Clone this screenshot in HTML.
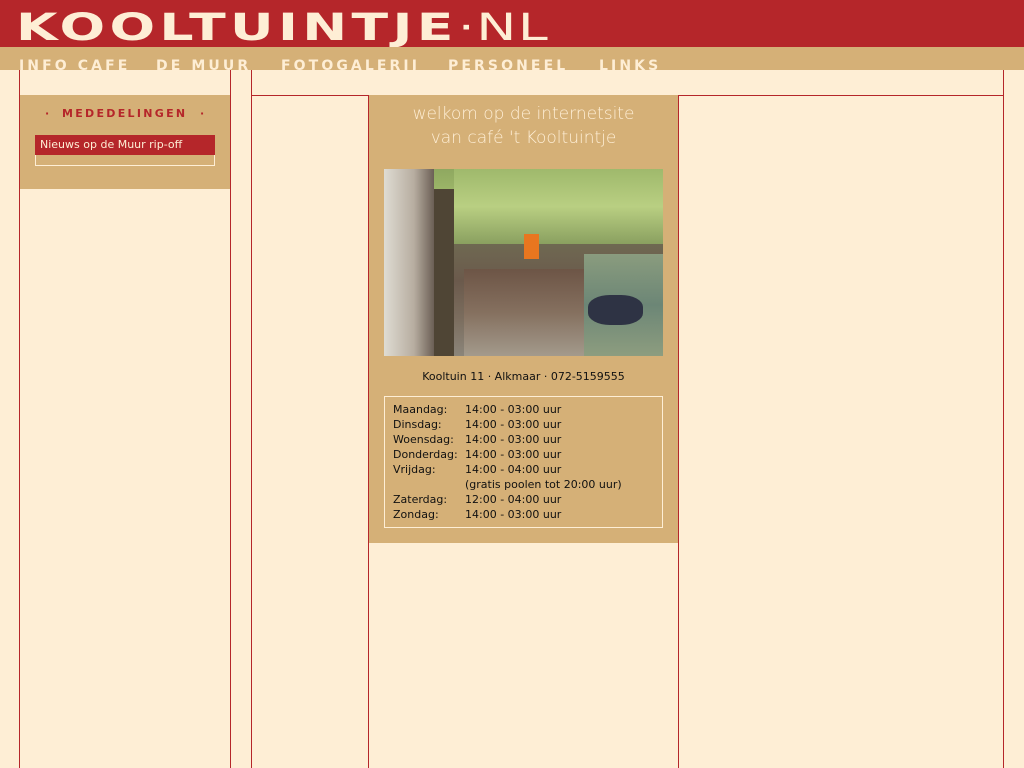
<!DOCTYPE html>
<html><head><meta charset="utf-8"><style>
*{margin:0;padding:0;box-sizing:border-box}
body{width:1024px;height:768px;background:#feeed5;position:relative;overflow:hidden;font-family:Verdana,"DejaVu Sans",sans-serif}
.abs{position:absolute}
.vl{position:absolute;width:1px;background:#b5262a}
.hl{position:absolute;height:1px;background:#b5262a}
#hdr{left:0;top:0;width:1024px;height:47px;background:#b5262a}
#band{left:0;top:47px;width:1024px;height:23px;background:#d5b077;overflow:hidden}
#logo{left:16px;top:9px;font-family:"DejaVu Sans","Liberation Sans",sans-serif;font-weight:bold;font-size:37px;letter-spacing:3px;color:#feeed5;line-height:37px;white-space:nowrap;transform:scale(1.45,1);transform-origin:top left}
#logo span{font-weight:normal;letter-spacing:1px}
#nav{left:19px;top:12px;font-family:"DejaVu Sans",sans-serif;font-weight:bold;font-size:14px;letter-spacing:3.1px;color:#feeed5;white-space:nowrap;line-height:14px}
.n{position:absolute;top:0}
.md{color:#b5262a;font-family:'DejaVu Sans',sans-serif;font-weight:bold;font-size:11px;position:absolute;top:107px}
</style></head><body>
<div id="hdr" class="abs"></div>
<div id="logo" class="abs">KOOLTUINTJE<span>·NL</span></div>
<div id="band" class="abs"><div id="nav" class="abs">
<span class="n" style="left:0">INFO CAFE</span><span class="n" style="left:137px">DE MUUR</span><span class="n" style="left:262px">FOTOGALERIJ</span><span class="n" style="left:429px">PERSONEEL</span><span class="n" style="left:580px">LINKS</span></div></div>

<div class="vl" style="left:19px;top:70px;height:698px"></div>
<div class="vl" style="left:230px;top:70px;height:698px"></div>
<div class="abs" style="left:20px;top:95px;width:210px;height:94px;background:#d5b077"></div>
<div class="md" style="left:45px">·</div>
<div class="md" style="left:200px">·</div>
<div class="md" style="left:62px;letter-spacing:2.3px">MEDEDELINGEN</div>
<div class="abs" style="left:35px;top:135px;width:180px;height:31px;border:1px solid #feeed5;border-top:none"></div>
<div class="abs" style="left:35px;top:135px;width:180px;height:20px;background:#b5262a;color:#feeed5;font-size:11px;line-height:20px;padding-left:5px">Nieuws op de Muur rip-off</div>

<div class="vl" style="left:251px;top:70px;height:698px"></div>
<div class="vl" style="left:1003px;top:70px;height:698px"></div>
<div class="hl" style="left:251px;top:95px;width:118px"></div>
<div class="hl" style="left:678px;top:95px;width:326px"></div>
<div class="vl" style="left:368px;top:95px;height:673px"></div>
<div class="vl" style="left:678px;top:95px;height:673px"></div>
<div class="abs" style="left:369px;top:95px;width:309px;height:448px;background:#d5b077"></div>
<div class="abs" style="left:369px;top:102px;width:309px;text-align:center;color:#feeed5;font-family:'DejaVu Sans',sans-serif;font-size:17px;line-height:24px;font-weight:200">welkom op de internetsite<br>van café 't Kooltuintje</div>

<div class="abs" style="left:384px;top:169px;width:279px;height:187px;overflow:hidden;background:linear-gradient(180deg,#8fa860 0%,#a3bd6d 18%,#6f6a52 38%,#6b5a4c 60%,#7b6d5e 80%,#8b857a 100%)">
<div class="abs" style="left:0;top:0;width:50px;height:187px;background:linear-gradient(90deg,#dfdcd3,#b7ada0 60%,#6b5f55)"></div>
<div class="abs" style="left:50px;top:20px;width:20px;height:167px;background:#4f4535"></div>
<div class="abs" style="left:70px;top:0;width:209px;height:75px;background:linear-gradient(180deg,#9fb96c,#b9cf82 50%,#8aa060)"></div>
<div class="abs" style="left:200px;top:85px;width:79px;height:102px;background:linear-gradient(180deg,#8a9c7e,#6c8676 50%,#8d9d7f)"></div>
<div class="abs" style="left:204px;top:126px;width:55px;height:30px;border-radius:40%;background:#2e3344"></div>
<div class="abs" style="left:140px;top:65px;width:15px;height:25px;background:#e8761f"></div>
<div class="abs" style="left:80px;top:100px;width:120px;height:87px;background:linear-gradient(180deg,#6d5546,#85705f 50%,#a39a8c)"></div>
</div>

<div class="abs" style="left:369px;top:370px;width:309px;text-align:center;font-size:11px;color:#111">Kooltuin 11 · Alkmaar · 072-5159555</div>
<div class="abs" style="left:384px;top:396px;width:279px;height:132px;border:1px solid #feeed5"></div>
<div class="abs" style="left:393px;top:402px;font-size:11px;line-height:15px;color:#111">Maandag:<br>Dinsdag:<br>Woensdag:<br>Donderdag:<br>Vrijdag:<br><br>Zaterdag:<br>Zondag:</div>
<div class="abs" style="left:465px;top:402px;font-size:11px;line-height:15px;color:#111;white-space:nowrap">14:00 - 03:00 uur<br>14:00 - 03:00 uur<br>14:00 - 03:00 uur<br>14:00 - 03:00 uur<br>14:00 - 04:00 uur<br>(gratis poolen tot 20:00 uur)<br>12:00 - 04:00 uur<br>14:00 - 03:00 uur</div>
</body></html>
